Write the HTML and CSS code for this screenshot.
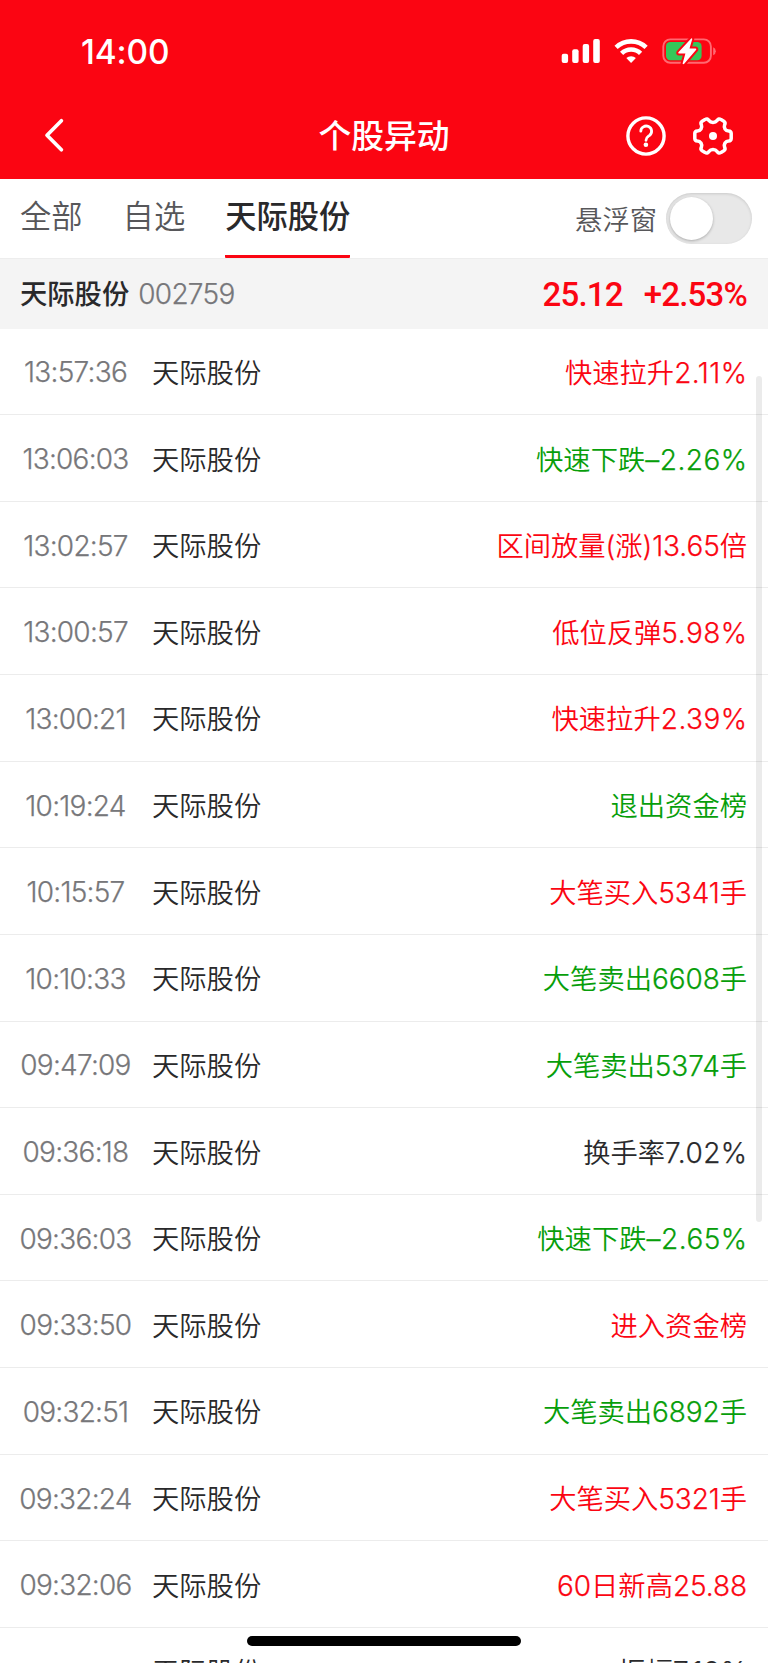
FILE: index.html
```html
<!DOCTYPE html>
<html lang="zh-CN">
<head>
<meta charset="utf-8">
<title>个股异动</title>
<link rel="stylesheet" href="styles.css">
</head>
<body>
<div class="screen">
  <header class="header">
    <div class="status">
      <span class="clock">14:00</span>
      <svg class="status-icons" width="160" height="32" viewBox="0 0 160 32">
        <g fill="#fff">
          <rect x="1.7" y="17.8" width="6.4" height="9.3" rx="2"/>
          <rect x="12.2" y="13.3" width="6.4" height="13.8" rx="2"/>
          <rect x="22.7" y="8" width="6.4" height="19.1" rx="2"/>
          <rect x="33.2" y="3" width="6.6" height="24.1" rx="2"/>
        </g>
        <g fill="none" stroke="#fff" stroke-width="4.6">
          <path d="M56.1 11.4a21.6 21.6 0 0 1 30 0"/>
          <path d="M61.6 17.4a13.6 13.6 0 0 1 19 0"/>
        </g>
        <path d="M66.3 22a7.4 7.4 0 0 1 9.6 0l-4.8 5z" fill="#fff"/>
        <rect x="103.3" y="3.4" width="47.6" height="23.4" rx="7" fill="none" stroke="#ff6972" stroke-width="1.9"/>
        <path d="M153.2 11.2q2.6 1.2 2.6 4t-2.6 4z" fill="#ff6972"/>
        <rect x="106" y="6" width="35.6" height="18.2" rx="4.2" fill="#35c759"/>
        <path d="M131.2 2.4L118.4 16.3Q117.8 17.5 119.1 17.5H125.4L122.6 27.6Q123.2 28.8 124.2 27.8L136.2 13.8Q136.6 12.6 135.4 12.6H129.5L132.3 2.9Q131.9 1.8 131.2 2.4Z" fill="#fff" stroke="#fb0512" stroke-width="4" paint-order="stroke"/>
      </svg>
    </div>
    <div class="navbar">
      <svg class="back" width="24" height="36" viewBox="0 0 24 36"><path d="M18.4 3.7L4 18.2L18.4 32.7" fill="none" stroke="#fff" stroke-width="3.7" stroke-linecap="round" stroke-linejoin="round"/></svg>
      <h1 class="title">个股异动</h1>
      <div class="actions">
        <svg width="40" height="40" viewBox="0 0 40 40" fill="none" stroke="#fff">
          <circle cx="20" cy="20" r="18.1" stroke-width="3.4"/>
          <path d="M14.8 15.2a5.4 5.2 0 1 1 8.8 4.1C21.3 21 20 21.5 20 24.3" stroke-width="2.8" stroke-linecap="round"/>
          <circle cx="19.9" cy="28.8" r="2.3" fill="#fff" stroke="none"/>
        </svg>
        <svg width="40" height="40" viewBox="0 0 40 40" fill="none" stroke="#fff">
          <path d="M12 3.6Q14.4 2 15.8 4.4Q17.4 6.4 20 6.4Q22.6 6.4 24.2 4.4Q25.6 2 28 3.6L30.8 5.2Q32.8 6.5 31.6 8.9Q30.8 11 32 13Q33.3 15 35.6 15Q38.2 15.1 38.2 17.5V22.5Q38.2 24.9 35.6 25Q33.3 25 32 27Q30.8 29 31.6 31.1Q32.8 33.5 30.8 34.8L28 36.4Q25.6 38 24.2 35.6Q22.6 33.6 20 33.6Q17.4 33.6 15.8 35.6Q14.4 38 12 36.4L9.2 34.8Q7.2 33.5 8.4 31.1Q9.2 29 8 27Q6.7 25 4.4 25Q1.8 24.9 1.8 22.5V17.5Q1.8 15.1 4.4 15Q6.7 15 8 13Q9.2 11 8.4 8.9Q7.2 6.5 9.2 5.2Z" stroke-width="3.5" stroke-linejoin="round"/>
          <circle cx="20" cy="20" r="4" fill="#fff" stroke="none"/>
        </svg>
      </div>
    </div>
  </header>
  <nav class="tabs">
    <span class="tab">全部</span>
    <span class="tab">自选</span>
    <span class="tab tab-active">天际股份</span>
    <span class="float-label">悬浮窗</span>
    <span class="switch"><span class="knob"></span></span>
  </nav>
  <section class="quote">
    <strong class="quote-name">天际股份</strong>
    <span class="quote-code">002759</span>
    <span class="price">25.12</span>
    <span class="change">+2.53%</span>
  </section>
  <main class="list">
    <div class="row"><time>13:57:36</time><span class="name">天际股份</span><span class="event up">快速拉升<b class="pct">2.11%</b></span></div>
    <div class="row"><time>13:06:03</time><span class="name">天际股份</span><span class="event down">快速下跌<b class="pct">–2.26%</b></span></div>
    <div class="row"><time>13:02:57</time><span class="name">天际股份</span><span class="event up">区间放量<b>(</b>涨<b>)13.65</b>倍</span></div>
    <div class="row"><time>13:00:57</time><span class="name">天际股份</span><span class="event up">低位反弹<b class="pct">5.98%</b></span></div>
    <div class="row"><time>13:00:21</time><span class="name">天际股份</span><span class="event up">快速拉升<b class="pct">2.39%</b></span></div>
    <div class="row"><time>10:19:24</time><span class="name">天际股份</span><span class="event down">退出资金榜</span></div>
    <div class="row"><time>10:15:57</time><span class="name">天际股份</span><span class="event up">大笔买入<b>5341</b>手</span></div>
    <div class="row"><time>10:10:33</time><span class="name">天际股份</span><span class="event down">大笔卖出<b>6608</b>手</span></div>
    <div class="row"><time>09:47:09</time><span class="name">天际股份</span><span class="event down">大笔卖出<b>5374</b>手</span></div>
    <div class="row"><time>09:36:18</time><span class="name">天际股份</span><span class="event">换手率<b class="pct">7.02%</b></span></div>
    <div class="row"><time>09:36:03</time><span class="name">天际股份</span><span class="event down">快速下跌<b class="pct">–2.65%</b></span></div>
    <div class="row"><time>09:33:50</time><span class="name">天际股份</span><span class="event up">进入资金榜</span></div>
    <div class="row"><time>09:32:51</time><span class="name">天际股份</span><span class="event down">大笔卖出<b>6892</b>手</span></div>
    <div class="row"><time>09:32:24</time><span class="name">天际股份</span><span class="event up">大笔买入<b>5321</b>手</span></div>
    <div class="row"><time>09:32:06</time><span class="name">天际股份</span><span class="event up"><b>60</b>日新高<b>25.88</b></span></div>
    <div class="row"><time></time><span class="name">天际股份</span><span class="event">振幅<b class="pct">7.10%</b></span></div>
  </main>
  <div class="scrollbar"></div>
  <div class="home-indicator"></div>
</div>
</body>
</html>
```
FILE: styles.css
```css
* { box-sizing: border-box; }
body {
  margin: 0;
  background: #fff;
  color: #29292b;
  font-family: Inter, "Noto Sans CJK SC", sans-serif;
}
.screen { position: relative; width: 768px; height: 1663px; overflow: hidden; }

.header { height: 179.3px; background: #fb0512; color: #fff; }
.status { height: 94px; padding: 34px 48px 0 81px; display: flex; justify-content: space-between; }
.clock { padding-top: 1px; font-size: 33.4px; line-height: 34px; font-weight: 550; letter-spacing: -0.1px; }
.status-icons { margin-top: 2px; }
.navbar { height: 84px; display: grid; grid-template-columns: 200px 1fr 200px; align-items: center; }
.back { margin-left: 43px; margin-bottom: 2px; }
.title { margin: 0; font-size: 32.8px; line-height: 48px; font-weight: 500; text-align: center; }
.actions { display: flex; gap: 27px; justify-content: flex-end; padding-right: 35px; }

.tabs { height: 78.3px; padding: 0 16px 0 20px; display: flex; align-items: center; }
.tab { height: 78.3px; margin-right: 40px; font-size: 31.3px; line-height: 76px; font-weight: 350; color: #57575a; }
.tab-active { color: #29292b; font-weight: 500; border-bottom: 3.5px solid #fb0512; border-radius: 1px; }
.float-label { margin-left: auto; font-size: 27.3px; color: #57575a; font-weight: 350; }
.switch { width: 86px; height: 51px; margin-left: 9px; padding: 4px; border-radius: 26px; background: #e8e8e8; box-shadow: inset 0 1px 3px #0002; }
.knob { display: block; width: 43px; height: 43px; border-radius: 50%; background: #fff; box-shadow: 0 1px 3px #0004; }

.quote { height: 71px; padding: 0 21px 0 20px; display: flex; align-items: center; background: #f4f4f4; border-top: 1px solid #ededed; }
.quote-name { padding-bottom: 3px; font-size: 27.3px; font-weight: 500; }
.quote-code { margin-left: 9px; font-size: 28px; font-weight: 300; letter-spacing: -0.7px; color: #77777a; -webkit-text-stroke: 0.25px; }
.price { margin-left: auto; }
.price, .change { padding-top: 2px; color: #fb0512; font-family: Roboto, sans-serif; font-size: 33px; font-weight: 500; letter-spacing: -0.8px; }
.change { margin-left: 21px; }

.row { height: 86.63px; padding: 0 21px 0 16px; display: flex; align-items: center; border-bottom: 1px solid #ececec; font-size: 27.3px; font-weight: 350; }
.row time { width: 119px; padding-top: 2px; text-align: center; font-size: 28px; font-weight: 300; letter-spacing: -0.75px; color: #77777a; -webkit-text-stroke: 0.25px; }
.name { margin-left: 17px; padding-bottom: 1px; }
.event { margin-left: auto; padding-bottom: 1px; white-space: nowrap; }
.event b { font-size: 28px; font-weight: 300; letter-spacing: -0.1px; -webkit-text-stroke: 0.25px; }
.event .pct { margin-right: -0.6px; letter-spacing: 0.5px; }
.up { color: #fb0512; }
.down { color: #079e0a; }

.scrollbar { position: absolute; left: 756px; top: 376px; width: 6px; height: 846px; border-radius: 3px; background: #00000014; }
.home-indicator { position: absolute; left: 247px; top: 1636px; width: 274px; height: 10px; border-radius: 5px; background: #000; }
```
